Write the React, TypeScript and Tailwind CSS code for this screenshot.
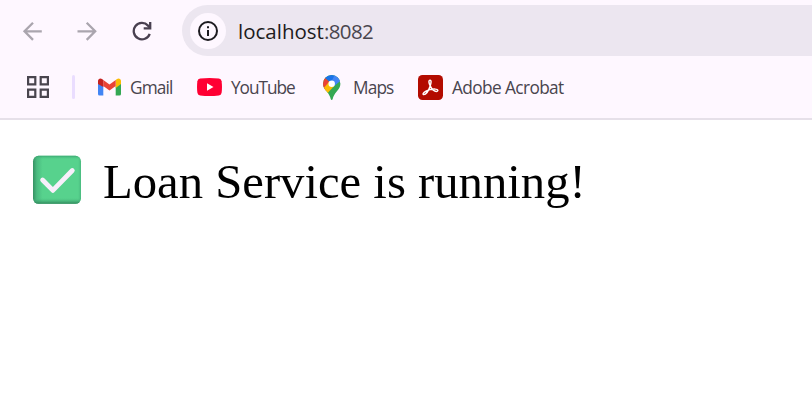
import React from "react";

function Back() {
  return (
    <svg width="20" height="20" viewBox="0 0 20 20" fill="none" stroke="#aaa5ae" strokeWidth="2.3">
      <path d="M19.800 10.300H2.500M11 1.700 2.500 10.300l8.500 8.600" />
    </svg>
  );
}

function Forward() {
  return (
    <svg width="20" height="20" viewBox="0 0 20 20" fill="none" stroke="#aaa5ae" strokeWidth="2.3">
      <path d="M.5 10.300H18M9.700 1.700l8.500 8.600-8.500 8.600" />
    </svg>
  );
}

function Reload() {
  return (
    <svg width="20" height="20" viewBox="0 0 20 20" fill="none" stroke="#494050" strokeWidth="2.3">
      <path d="M17.700 12.800A8.200 8.200 0 1 1 16 4.600l2 2.200" />
      <path d="M18.200 1v6.300h-6.500" />
    </svg>
  );
}

function Info() {
  return (
    <svg width="20" height="20" viewBox="0 0 20 20" fill="none" stroke="#1d1b20" strokeWidth="2">
      <circle cx="10" cy="10" r="9" />
      <path d="M10 9v6M10 5.200v2.100" />
    </svg>
  );
}

function Apps() {
  return (
    <svg width="22" height="22" viewBox="0 0 22 22" fill="none" stroke="#49454e" strokeWidth="2.200">
      <path d="M1.100 1.100h7.200v7.200H1.100zM13.700 1.100h7.200v7.200h-7.200zM1.100 13.700h7.200v7.200H1.100zM13.700 13.700h7.200v7.200h-7.200z" />
    </svg>
  );
}

function Gmail() {
  return (
    <svg width="23" height="18" viewBox="0 0 23 18">
      <path d="M0 4.500 5.300 8v9.500H1.600A1.600 1.600 0 0 1 0 15.900z" fill="#4285f4" />
      <path d="M23 4.500 17.700 8v9.500h3.700a1.600 1.600 0 0 0 1.600-1.600z" fill="#34a853" />
      <path d="M17.700 2 19 1c1.700-1.300 4-.1 4 2v3l-5.300 4z" fill="#fbbc04" />
      <path d="M5.300 2 11.500 6.600 17.700 2v6l-6.200 4.600L5.300 8z" fill="#ea4335" />
      <path d="M0 3c0-2.100 2.300-3.300 4-2l1.300 1v7L0 6z" fill="#c5221f" />
    </svg>
  );
}

function YouTube() {
  return (
    <svg width="25" height="18" viewBox="0 0 25 18">
      <path d="M3.200.5Q12.500-.5 21.800.5q2.400.3 2.800 2.700.8 5.800 0 11.600-.4 2.400-2.800 2.700-9.300 1-18.600 0Q.8 17.200.4 14.800q-.8-5.800 0-11.600Q.8.8 3.200.5z" fill="#ff0033" />
      <path d="m10 5.200 6.500 3.800L10 12.800z" fill="#fff" />
    </svg>
  );
}

function Maps() {
  return (
    <svg width="18" height="25" viewBox="0 0 18 25">
      <defs>
        <clipPath id="pin">
          <path d="M8.700 0A8.700 8.700 0 0 0 0 8.700c0 3.400 1.700 5.300 3.700 7.900 2.500 3.100 3.300 4.900 4 7.300.4 1.400 1.600 1.400 2 0 .7-2.400 1.500-4.200 4-7.300 2-2.600 3.700-4.500 3.700-7.900A8.700 8.700 0 0 0 8.700 0z" />
        </clipPath>
      </defs>
      <g clipPath="url(#pin)">
        <path d="M0 0h18v25H0z" fill="#34a853" />
        <path d="M0 0h13L8.700 8.700 2 3z" fill="#1a73e8" />
        <path d="M2 3.100 8.700 8.700 1 18l-4-5V3z" fill="#ea4335" />
        <path d="M6.300 6.600 0 14v6h2.800L11.200 11z" fill="#fbbc04" />
        <path d="M11.700 0 18 2v3.500L11.200 11 8.700 6z" fill="#4285f4" />
      </g>
      <circle cx="8.700" cy="8.700" r="3.200" fill="#fff" />
    </svg>
  );
}

function Acrobat() {
  return (
    <svg width="25" height="25" viewBox="0 0 25 25">
      <rect width="25" height="25" rx="4.500" fill="#b30b00" />
      <path d="M12.100 5.200c-1.900 0-1.200 3.300.2 6 1.500 2.800 3.900 5.200 6 5.200 2.400 0 1.900-2.200-.7-2.300-3.200-.2-7.300.7-10.100 2.200-2.600 1.400-3 3.300-1.600 3.300 2.200 0 5-4.800 6.300-8.600.9-2.800 1.400-5.800-.1-5.800z" fill="none" stroke="#fff" strokeWidth="1.450" />
    </svg>
  );
}

function CheckEmoji() {
  return (
    <svg className="mt-px" width="50" height="50" viewBox="0 0 50 50">
      <defs>
        <linearGradient id="edgeX">
          <stop offset="0" stopColor="#369163" />
          <stop offset=".08" stopColor="#4abb80" />
          <stop offset=".2" stopColor="#57d28d" />
          <stop offset=".94" stopColor="#57d28d" />
          <stop offset="1" stopColor="#4abb80" />
        </linearGradient>
        <linearGradient id="edgeY" x2="0" y2="1">
          <stop offset="0" stopColor="#329b69" stopOpacity=".75" />
          <stop offset=".07" stopColor="#4abb80" stopOpacity="0" />
          <stop offset=".88" stopColor="#4abb80" stopOpacity="0" />
          <stop offset="1" stopColor="#2f8459" />
        </linearGradient>
      </defs>
      <rect x="1" y=".8" width="48" height="48" rx="5.500" fill="url(#edgeX)" />
      <rect x="1" y=".8" width="48" height="48" rx="5.500" fill="url(#edgeY)" />
      <path d="m10.600 25 10.300 10.400L40.300 15.500" fill="none" stroke="#f8effb" strokeWidth="4.800" strokeLinecap="round" strokeLinejoin="round" />
    </svg>
  );
}

export default function App() {
  return (
    <div className="h-[411px] w-full overflow-hidden bg-white">
      <header className="h-[120px] border-b-2 border-[#e6e0e9] bg-[#fef7ff] pt-[5px] font-['Open_Sans','Noto_Sans',sans-serif] whitespace-nowrap">
        <div className="flex h-[51px] items-center">
          <div className="ml-[22px] flex w-[160px] items-center gap-[35px]">
            <Back />
            <Forward />
            <Reload />
          </div>
          <div className="flex h-[51px] flex-1 items-center rounded-l-full bg-[#ece6f0] pl-2">
            <div className="flex size-9 items-center justify-center rounded-full bg-[#fef7ff]">
              <Info />
            </div>
            <span className="ml-3 text-[20.500px] leading-[30px] text-[#1d1b20]">
              localhost<span className="tracking-[-0.600px] text-[#49454e]">:8082</span>
            </span>
          </div>
        </div>
        <div className="flex h-[62px] items-center pl-[27px] text-[17.250px] leading-6 text-[#49454e]">
          <Apps />
          <div className="ml-[23px] h-6 w-[3px] rounded-full bg-[#eaddff]" />
          <div className="ml-[23px] flex w-[99px] items-center gap-[9px]">
            <Gmail />
            <span className="pt-0.5 tracking-[-0.850px]">Gmail</span>
          </div>
          <div className="flex w-[126px] items-center gap-[9px]">
            <YouTube />
            <span className="pt-0.5 tracking-[-1.050px]">YouTube</span>
          </div>
          <div className="flex w-[95px] items-center gap-[12px]">
            <Maps />
            <span className="pt-0.5 tracking-[-0.850px]">Maps</span>
          </div>
          <div className="flex items-center gap-[9px]">
            <Acrobat />
            <span className="pt-0.5 tracking-[-0.600px]">Adobe Acrobat</span>
          </div>
        </div>
      </header>
      <main className="flex items-start pt-[34px] pl-8">
        <CheckEmoji />
        <h1 className="ml-[21px] pt-px font-['Liberation_Serif',serif] text-[48.700px] leading-[54px] whitespace-nowrap text-black">
          Loan Service is running!
        </h1>
      </main>
    </div>
  );
}
